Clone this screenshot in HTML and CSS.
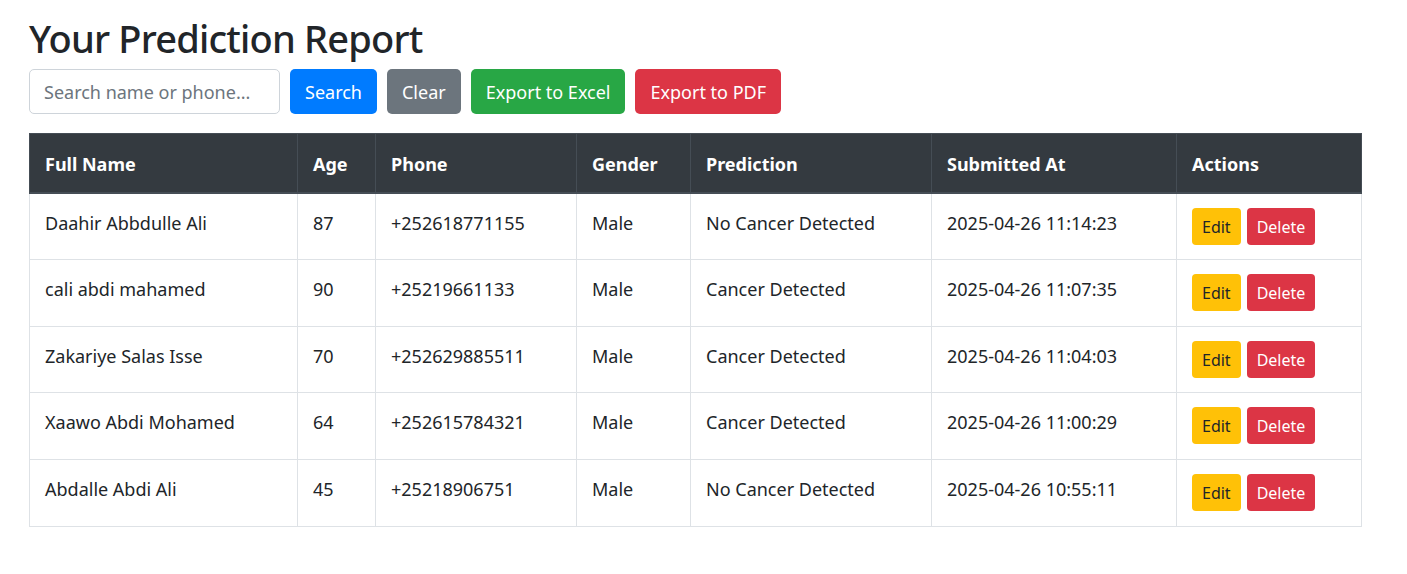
FILE: index.html
```html
<!DOCTYPE html>
<html lang="en">
<head>
<meta charset="utf-8">
<title>Your Prediction Report</title>
<link rel="stylesheet" href="styles.css">
</head>
<body>
<div class="page">
  <h1 class="title">Your Prediction Report</h1>
  <form class="toolbar">
    <input class="search" type="text" placeholder="Search name or phone...">
    <button type="button" class="btn btn-primary">Search</button>
    <button type="button" class="btn btn-secondary">Clear</button>
    <button type="button" class="btn btn-success">Export to Excel</button>
    <button type="button" class="btn btn-danger">Export to PDF</button>
  </form>
  <table class="report">
    <colgroup>
      <col class="c-name"><col class="c-age"><col class="c-phone"><col class="c-gender"><col class="c-pred"><col class="c-date"><col class="c-act">
    </colgroup>
    <thead>
      <tr><th>Full Name</th><th>Age</th><th>Phone</th><th>Gender</th><th>Prediction</th><th>Submitted At</th><th>Actions</th></tr>
    </thead>
    <tbody>
      <tr><td>Daahir Abbdulle Ali</td><td>87</td><td>+252618771155</td><td>Male</td><td>No Cancer Detected</td><td>2025-04-26 11:14:23</td><td class="acts"><button class="btn-sm btn-warning">Edit</button><button class="btn-sm btn-danger">Delete</button></td></tr>
      <tr><td>cali abdi mahamed</td><td>90</td><td>+25219661133</td><td>Male</td><td>Cancer Detected</td><td>2025-04-26 11:07:35</td><td class="acts"><button class="btn-sm btn-warning">Edit</button><button class="btn-sm btn-danger">Delete</button></td></tr>
      <tr><td>Zakariye Salas Isse</td><td>70</td><td>+252629885511</td><td>Male</td><td>Cancer Detected</td><td>2025-04-26 11:04:03</td><td class="acts"><button class="btn-sm btn-warning">Edit</button><button class="btn-sm btn-danger">Delete</button></td></tr>
      <tr><td>Xaawo Abdi Mohamed</td><td>64</td><td>+252615784321</td><td>Male</td><td>Cancer Detected</td><td>2025-04-26 11:00:29</td><td class="acts"><button class="btn-sm btn-warning">Edit</button><button class="btn-sm btn-danger">Delete</button></td></tr>
      <tr><td>Abdalle Abdi Ali</td><td>45</td><td>+25218906751</td><td>Male</td><td>No Cancer Detected</td><td>2025-04-26 10:55:11</td><td class="acts"><button class="btn-sm btn-warning">Edit</button><button class="btn-sm btn-danger">Delete</button></td></tr>
    </tbody>
  </table>
</div>
</body>
</html>
```
FILE: styles.css
```css
* { box-sizing: border-box; }
html, body { margin: 0; padding: 0; background: #fff; }
body {
  font-family: "Noto Sans", "Open Sans", "Liberation Sans", sans-serif;
  font-size: 19.2px;
  line-height: 1.5;
  color: #212529;
}
.page { padding: 10px 29px 0 29px; width: 1390px; }
.title {
  margin: 0;
  font-size: 38px;
  font-weight: 500;
  line-height: 57px;
  letter-spacing: -0.8px;
}
.toolbar { display: flex; align-items: center; gap: 10px; margin: 2px 0 0 0; }
.search {
  width: 251px;
  height: 45px;
  padding: 7px 14px;
  border: 1px solid #ced4da;
  border-radius: 5px;
  font: inherit;
  font-size: 18px;
  color: #495057;
}
.search::placeholder { color: #6c757d; }
.btn {
  height: 45px;
  padding: 2px 14px 0 14px;
  border: 1px solid transparent;
  border-radius: 5px;
  font: inherit;
  font-size: 18px;
  color: #fff;
  cursor: pointer;
}
.btn-primary { background: #007bff; }
.btn-secondary { background: #6c757d; }
.btn-success { background: #28a745; }
.btn-danger { background: #dc3545; color: #fff; }
.btn-warning { background: #ffc107; color: #212529; }
.report {
  margin-top: 19px;
  width: 1332px;
  border-collapse: collapse;
  table-layout: fixed;
}
.c-name { width: 268px; }
.c-age { width: 78px; }
.c-phone { width: 201px; }
.c-gender { width: 114px; }
.c-pred { width: 241px; }
.c-date { width: 245px; }
.c-act { width: 185px; }
.report th {
  background: #343a40;
  color: #fff;
  font-weight: 700;
  text-align: left;
  padding: 16px 15px 12px 15px;
  height: 59px;
  font-size: 18px;
  border: 1px solid #454d55;
  border-bottom-width: 2px;
  vertical-align: middle;
}
.report td {
  padding: 16px 15px 12px 15px;
  font-size: 18px;
  border: 1px solid #dee2e6;
  vertical-align: top;
  height: 66.8px;
}
.report td.acts { padding-top: 14px; }
.acts { white-space: nowrap; }
.btn-sm {
  display: inline-block;
  height: 37px;
  padding: 1px 9px 0 9px;
  margin-right: 6px;
  border: 1px solid transparent;
  border-radius: 4px;
  font: inherit;
  font-size: 16px;
  vertical-align: top;
}
```
